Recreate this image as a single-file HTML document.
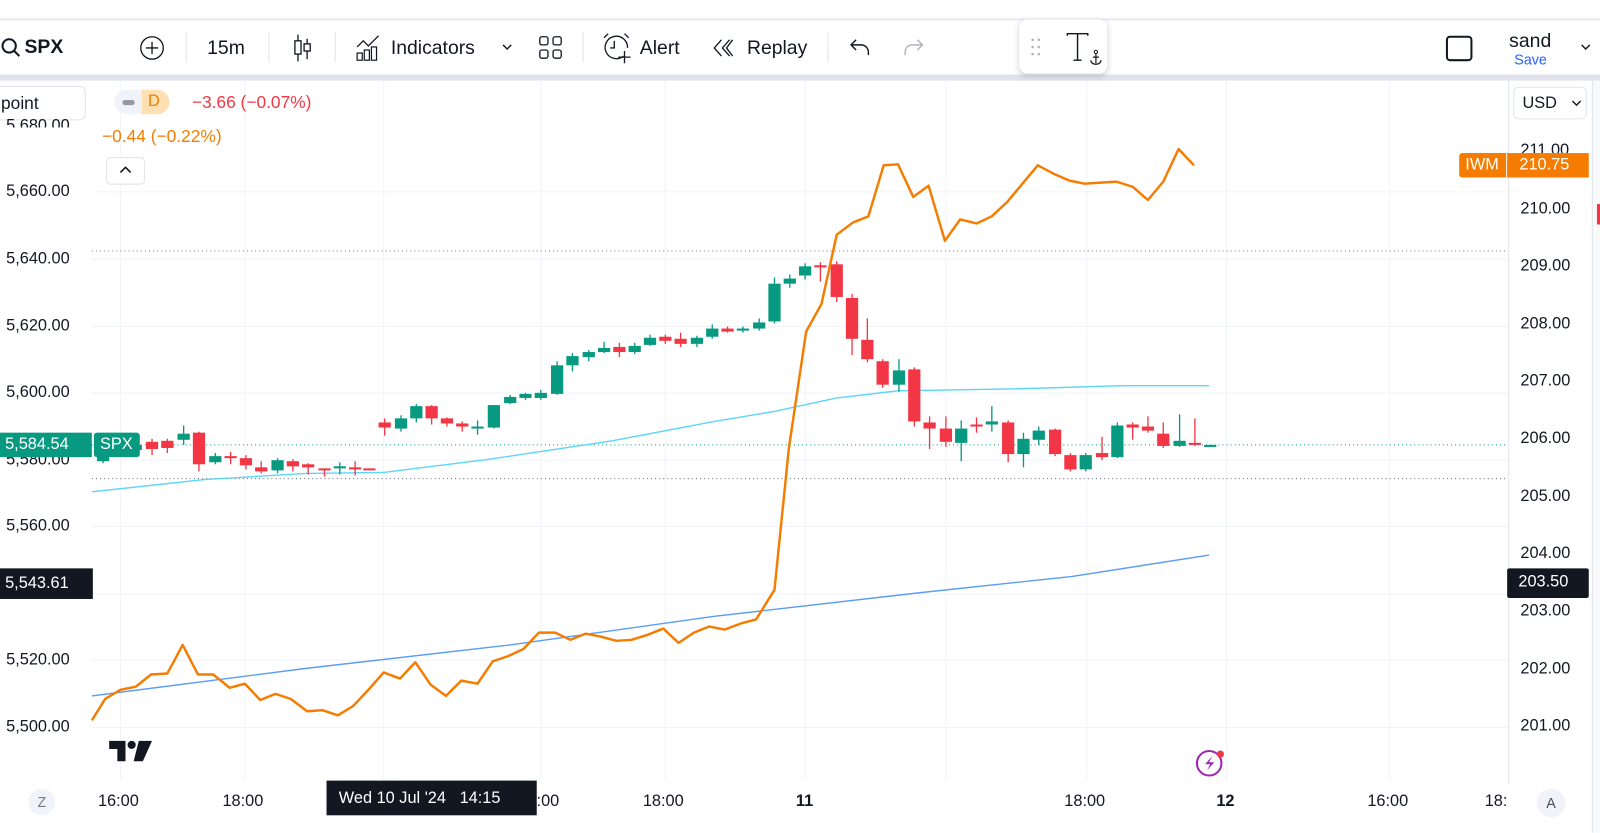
<!DOCTYPE html>
<html><head><meta charset="utf-8"><style>
*{margin:0;padding:0;box-sizing:border-box}
body{width:1600px;height:816px;overflow:hidden;background:#fff;font-family:"Liberation Sans",sans-serif;color:#131722;position:relative}
#root{position:absolute;left:0;top:0;width:1568px;height:800px;transform:scale(1.020408);transform-origin:0 0}
.a{position:absolute}
.tb{font-size:19px;color:#131722}
.sep{position:absolute;top:31px;width:1px;height:30px;background:#e0e3eb}
.ax{position:absolute;font-size:16px;color:#131722}
</style></head><body><div id="root">
<div class="a" style="left:0;top:18px;width:1600px;height:2px;background:#e8e9ee"></div>
<div class="a" style="left:0;top:73px;width:1600px;height:6px;background:#e0e3eb"></div>
<!-- toolbar -->
<svg class="a" style="left:0;top:36px" width="22" height="22" viewBox="0 0 22 22"><circle cx="9" cy="9" r="6.5" fill="none" stroke="#131722" stroke-width="2"/><path d="M14 14l5 5" stroke="#131722" stroke-width="2"/></svg>
<div class="a tb" style="left:24px;top:36px;font-weight:bold">SPX</div>
<svg class="a" style="left:136px;top:34px" width="26" height="26"><circle cx="13" cy="13" r="11" fill="none" stroke="#131722" stroke-width="1.3"/><path d="M13 7v12M7 13h12" stroke="#131722" stroke-width="1.3"/></svg>
<div class="sep" style="left:182px"></div>
<div class="a tb" style="left:203px;top:37px">15m</div>
<div class="sep" style="left:263px"></div>
<svg class="a" style="left:285px;top:32px" width="22" height="30"><path d="M7 2v26M16 6v20" stroke="#131722" stroke-width="1.3"/><rect x="4" y="8" width="6" height="13" fill="#fff" stroke="#131722" stroke-width="1.3"/><rect x="13" y="11" width="6" height="7" fill="#fff" stroke="#131722" stroke-width="1.3"/></svg>
<div class="sep" style="left:328px"></div>
<svg class="a" style="left:348px;top:32px" width="28" height="28"><path d="M2 14l6-6 5 5 10-10" fill="none" stroke="#131722" stroke-width="1.3"/><rect x="2" y="20" width="5" height="7" fill="none" stroke="#131722" stroke-width="1.2"/><rect x="9" y="17" width="5" height="10" fill="none" stroke="#131722" stroke-width="1.2"/><rect x="16" y="14" width="5" height="13" fill="none" stroke="#131722" stroke-width="1.2"/></svg>
<div class="a tb" style="left:383px;top:37px">Indicators</div>
<svg class="a" style="left:491px;top:42px" width="12" height="8"><path d="M2 2l4 4 4-4" fill="none" stroke="#131722" stroke-width="1.4"/></svg>
<svg class="a" style="left:528px;top:35px" width="24" height="24"><rect x="1" y="1" width="8" height="8" rx="2" fill="none" stroke="#131722" stroke-width="1.3"/><rect x="14" y="1" width="8" height="8" rx="2" fill="none" stroke="#131722" stroke-width="1.3"/><rect x="1" y="14" width="8" height="8" rx="2" fill="none" stroke="#131722" stroke-width="1.3"/><rect x="14" y="14" width="8" height="8" rx="2" fill="none" stroke="#131722" stroke-width="1.3"/></svg>
<div class="sep" style="left:571px"></div>
<svg class="a" style="left:589px;top:31px" width="32" height="32"><path d="M22 24a11 11 0 1 1 4-8" fill="none" stroke="#131722" stroke-width="1.3"/><path d="M13 9v7h-4" fill="none" stroke="#131722" stroke-width="1.3"/><path d="M23 19v12M17 25h12" stroke="#131722" stroke-width="1.3"/><path d="M3 6l4-4M23 2l4 4" stroke="#131722" stroke-width="1.3"/></svg>
<div class="a tb" style="left:627px;top:37px">Alert</div>
<svg class="a" style="left:698px;top:37px" width="22" height="20"><path d="M9 2l-7 8 7 8M17 2l-7 8 7 8M20 2l-6 8 6 8" fill="none" stroke="#131722" stroke-width="1.3"/></svg>
<div class="a tb" style="left:732px;top:37px">Replay</div>
<div class="sep" style="left:811px"></div>
<svg class="a" style="left:832px;top:36px" width="22" height="20"><path d="M7 3L2 8l5 5M2 8h10a7 7 0 0 1 7 7v3" fill="none" stroke="#131722" stroke-width="1.4"/></svg>
<svg class="a" style="left:884px;top:36px" width="22" height="20"><path d="M15 3l5 5-5 5M20 8H10a7 7 0 0 0-7 7v3" fill="none" stroke="#b2b5be" stroke-width="1.4"/></svg>
<div class="a" style="left:999px;top:19px;width:86px;height:53px;background:#fff;border-radius:8px;box-shadow:0 2px 6px rgba(0,0,0,.18)"></div>
<svg class="a" style="left:1010px;top:37px" width="10" height="18"><g fill="#b2b5be"><circle cx="2" cy="2" r="1.3"/><circle cx="8" cy="2" r="1.3"/><circle cx="2" cy="9" r="1.3"/><circle cx="8" cy="9" r="1.3"/><circle cx="2" cy="16" r="1.3"/><circle cx="8" cy="16" r="1.3"/></g></svg>
<svg class="a" style="left:1044px;top:31px" width="36" height="34"><path d="M2 4V2h20v2M12 2v26M8 28h8" fill="none" stroke="#131722" stroke-width="1.4"/><circle cx="30" cy="20" r="1.6" fill="none" stroke="#131722"/><path d="M30 22v9M27 25h6M25 28a5 4 0 0 0 10 0" fill="none" stroke="#131722" stroke-width="1.2"/></svg>
<div class="a" style="left:1417px;top:35px;width:26px;height:25px;border:2px solid #131722;border-radius:4px"></div>
<div class="a" style="left:1479px;top:30px;font-size:19px">sand</div>
<div class="a" style="left:1484px;top:50px;font-size:14px;color:#2962ff">Save</div>
<svg class="a" style="left:1548px;top:42px" width="12" height="8"><path d="M2 2l4 4 4-4" fill="none" stroke="#131722" stroke-width="1.4"/></svg>

<!-- chart -->
<svg class="a" style="left:0;top:79px" width="1600" height="737" viewBox="0 79 1600 737">
<g stroke="#f0f3fa" stroke-width="1">
<path d="M90 188H1478M90 254H1478M90 320H1478M90 385H1478M90 451H1478M90 516H1478M90 582H1478M90 647H1478M90 713H1478"/>
<path d="M118 79V765M240 79V765M376 79V765M530 79V765M652 79V765M789 79V765M927 79V765M1065 79V765M1202 79V765M1362 79V765"/>
</g>
<path d="M90 246H1478M90 469H1478" stroke="#787b86" stroke-width="1" stroke-dasharray="1 3"/>
<path d="M90 436H1478" stroke="#089981" stroke-width="1" stroke-dasharray="1 3"/>
<polyline fill="none" stroke="#5cd6f5" stroke-width="1.4" points="90,482 200,470 300,464 376,463 480,450 600,432 700,413 760,403 820,390 880,383 1000,381 1100,378 1185,378"/>
<polyline fill="none" stroke="#5b9cf6" stroke-width="1.4" points="90,682 300,655 500,632 700,604 900,581 1050,565 1185,544"/>
<g id="c"></g>
<polyline fill="none" stroke="#f57c00" stroke-width="2.4" stroke-linejoin="round" points="90,706 103,685 118,676 133,673 148,661 164,660 179,632 194,661 209,661 225,674 240,670 255,686 270,680 285,685 301,697 316,696 331,701 346,692 361,676 376,659 392,665 407,649 422,671 437,682 452,667 468,670 483,648 498,643 513,636 528,620 544,620 559,627 574,621 589,624 604,628 619,627 635,622 650,616 665,630 680,620 695,614 710,617 726,611 741,607 759,578 773,440 790,325 805,298 820,230 836,218 851,212 866,162 880,161 895,193 910,182 926,236 941,215 957,219 972,212 987,198 1002,180 1017,162 1032,170 1048,177 1063,180 1079,179 1094,178 1110,183 1125,196 1140,178 1155,146 1170,162"/>
</svg>
<script>
var d=[[101,'g',443,452,440,454],[133,'g',436,441,432,446],[149,'r',433,440,430,446],[164,'r',432,439,430,444],[180,'g',425,431,417,436],[195,'r',424,455,423,462],[211,'g',447,453,444,455],[226,'r',447,449,443,455],[241,'r',449,456,446,460],[256,'r',458,462,452,464],[272,'g',451,461,449,464],[287,'r',452,457,450,462],[302,'r',455,458,454,465],[318,'r',459,461,459,467],[333,'g',457,459,453,465],[348,'r',458,459,452,466],[362,'r',459,460,459,460],[377,'r',414,419,410,427],[393,'g',410,420,407,423],[408,'g',398,410,396,414],[423,'r',398,410,397,416],[438,'r',410,415,409,418],[453,'r',415,418,413,423],[468,'g',418,419,412,426],[484,'g',397,419,397,420],[500,'g',389,395,387,396],[515,'g',386,390,385,392],[530,'g',385,390,382,392],[546,'g',358,386,354,387],[561,'g',349,358,346,364],[577,'g',345,350,343,354],[592,'g',341,345,335,346],[607,'r',340,345,336,350],[622,'g',339,345,336,347],[637,'g',331,338,328,339],[652,'r',330,334,328,337],[667,'r',332,337,326,340],[683,'g',331,337,329,340],[698,'g',322,330,318,332],[713,'r',322,325,320,326],[728,'g',322,324,320,326],[744,'g',316,322,312,324],[759,'g',278,315,272,317],[774,'g',273,278,269,282],[789,'g',261,270,258,274],[804,'r',260,262,257,276],[820,'r',259,291,256,296],[835,'r',292,332,288,348],[850,'r',333,352,312,355],[865,'r',354,377,352,380],[881,'g',363,377,352,384],[896,'r',362,413,360,418],[911,'r',414,420,408,440],[927,'r',420,433,408,438],[942,'g',420,434,412,452],[957,'r',416,418,409,424],[972,'g',413,416,398,423],[988,'r',414,445,412,453],[1003,'g',430,445,424,458],[1018,'g',422,431,418,436],[1034,'r',421,445,420,447],[1049,'r',446,460,444,462],[1064,'g',446,460,444,462],[1080,'r',444,448,428,451],[1095,'g',417,448,414,449],[1110,'r',416,419,414,431],[1125,'r',418,422,408,424],[1140,'r',425,437,414,439],[1156,'g',432,437,406,438],[1171,'r',434,436,410,437],[1186,'g',436,437,436,437]];
var s='';d.forEach(function(c){var col=c[1]=='g'?'#089981':'#f23645';s+='<line x1="'+c[0]+'" x2="'+c[0]+'" y1="'+c[4]+'" y2="'+c[5]+'" stroke="'+col+'" stroke-width="1.3"/><rect x="'+(c[0]-6)+'" y="'+c[2]+'" width="12" height="'+Math.max(2,c[3]-c[2])+'" fill="'+col+'"/>';});
document.getElementById('c').innerHTML=s;
</script>
<!-- left overlays -->
<div class="a" style="left:-4px;top:84px;width:88px;height:34px;border:1px solid #e0e3eb;border-radius:6px;background:#fff;font-size:17px;padding:7px 0 0 4px">point</div>
<div class="ax" style="left:6px;top:115px;color:#131722;height:10px;overflow:hidden">5,680.00</div>
<div class="a" style="left:112px;top:88px;width:54px;height:24px;border-radius:12px;background:#f0f3fa"></div>
<div class="a" style="left:120px;top:98px;width:12px;height:5px;border-radius:3px;background:#9598a1"></div>
<div class="a" style="left:139px;top:88px;width:27px;height:24px;border-radius:0 12px 12px 0;background:#ffe0b2;color:#f57c00;font-size:16px;padding:3px 0 0 6px">D</div>
<div class="a" style="left:188px;top:91px;font-size:17px;color:#f23645">−3.66 (−0.07%)</div>
<div class="a" style="left:100px;top:124px;font-size:17px;color:#f57c00">−0.44 (−0.22%)</div>
<div class="a" style="left:104px;top:154px;width:38px;height:27px;border:1px solid #e0e3eb;border-radius:4px;background:#fff"></div>
<svg class="a" style="left:116px;top:162px" width="14" height="10"><path d="M2 7l5-5 5 5" fill="none" stroke="#131722" stroke-width="1.6"/></svg>
<div class="ax" style="left:6px;top:179px">5,660.00</div>
<div class="ax" style="left:6px;top:245px">5,640.00</div>
<div class="ax" style="left:6px;top:311px">5,620.00</div>
<div class="ax" style="left:6px;top:376px">5,600.00</div>
<div class="ax" style="left:6px;top:442px">5,580.00</div>
<div class="ax" style="left:6px;top:507px">5,560.00</div>
<div class="ax" style="left:6px;top:638px">5,520.00</div>
<div class="ax" style="left:6px;top:704px">5,500.00</div>
<div class="a" style="left:0;top:424px;width:90px;height:24px;background:#089981;color:#fff;font-size:16px;padding:3px 0 0 5px">5,584.54</div>
<div class="a" style="left:92px;top:424px;width:45px;height:24px;background:#089981;color:#fff;font-size:16px;padding:3px 0 0 6px;border-radius:3px">SPX</div>
<div class="a" style="left:0;top:557px;width:91px;height:30px;background:#131722;color:#fff;font-size:16px;padding:6px 0 0 5px">5,543.61</div>
<svg class="a" style="left:106px;top:725px" width="44" height="22"><path d="M1 1h16v20h-8V9H1z" fill="#131722"/><circle cx="23" cy="5" r="4" fill="#131722"/><path d="M30 1h13l-9 20h-9z" fill="#131722"/></svg>
<svg class="a" style="left:1171px;top:733px" width="30" height="30"><circle cx="14" cy="15" r="12" fill="none" stroke="#9c27b0" stroke-width="2"/><path d="M17 8l-7 8h5l-3 6 7-8h-5z" fill="#9c27b0"/><circle cx="25" cy="6" r="3.5" fill="#f23645"/></svg>
<!-- right axis -->
<div class="a" style="left:1478px;top:79px;width:1px;height:690px;background:#e0e3eb"></div>
<div class="a" style="left:1560px;top:79px;width:40px;height:737px;background:#f8f9fb;border-left:1px solid #e0e3eb"></div>
<div class="a" style="left:1483px;top:85px;width:72px;height:32px;border:1px solid #e0e3eb;border-radius:5px;background:#fff;font-size:16px;padding:7px 0 0 8px">USD</div>
<svg class="a" style="left:1540px;top:98px" width="10" height="7"><path d="M1 1l4 4 4-4" fill="none" stroke="#131722" stroke-width="1.4"/></svg>
<div class="ax" style="left:1490px;top:139px">211.00</div>
<div class="ax" style="left:1490px;top:196px">210.00</div>
<div class="ax" style="left:1490px;top:252px">209.00</div>
<div class="ax" style="left:1490px;top:309px">208.00</div>
<div class="ax" style="left:1490px;top:365px">207.00</div>
<div class="ax" style="left:1490px;top:421px">206.00</div>
<div class="ax" style="left:1490px;top:478px">205.00</div>
<div class="ax" style="left:1490px;top:534px">204.00</div>
<div class="ax" style="left:1490px;top:590px">203.00</div>
<div class="ax" style="left:1490px;top:647px">202.00</div>
<div class="ax" style="left:1490px;top:703px">201.00</div>
<div class="a" style="left:1430px;top:150px;width:46px;height:24px;background:#f57c00;color:#fff;font-size:16px;padding:3px 0 0 6px;border-radius:3px 0 0 3px">IWM</div>
<div class="a" style="left:1477px;top:150px;width:80px;height:24px;background:#f57c00;color:#fff;font-size:16px;padding:3px 0 0 12px">210.75</div>
<div class="a" style="left:1477px;top:557px;width:80px;height:29px;background:#131722;color:#fff;font-size:16px;padding:5px 0 0 11px;border-radius:2px">203.50</div>
<div class="a" style="left:1565px;top:200px;width:4px;height:20px;background:#f23645"></div>
<!-- time axis -->
<div class="a" style="left:28px;top:773px;width:26px;height:26px;border-radius:13px;background:#f0f3fa;color:#787b86;font-size:14px;text-align:center;padding-top:5px">Z</div>
<div class="ax" style="left:96px;top:777px">16:00</div>
<div class="ax" style="left:218px;top:777px">18:00</div>
<div class="ax" style="left:508px;top:777px">16:00</div>
<div class="ax" style="left:630px;top:777px">18:00</div>
<div class="ax" style="left:780px;top:777px;font-weight:bold">11</div>
<div class="ax" style="left:1043px;top:777px">18:00</div>
<div class="ax" style="left:1192px;top:777px;font-weight:bold">12</div>
<div class="ax" style="left:1340px;top:777px">16:00</div>
<div class="ax" style="left:1455px;top:777px">18:</div>
<div class="a" style="left:320px;top:765px;width:206px;height:34px;background:#131722;color:#fff;font-size:16px;padding:9px 0 0 12px;white-space:pre">Wed 10 Jul '24   14:15</div>
<div class="a" style="left:1506px;top:773px;width:28px;height:28px;border-radius:14px;background:#f0f3fa;color:#4a4e59;font-size:14px;text-align:center;padding-top:6px">A</div>
</div></body></html>
